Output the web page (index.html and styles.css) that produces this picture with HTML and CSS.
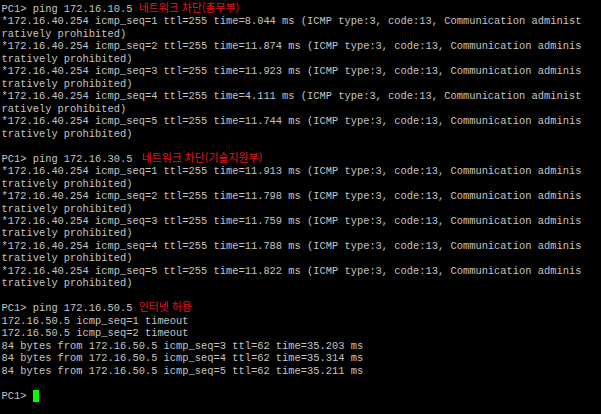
FILE: index.html
```html
<!DOCTYPE html>
<html lang="ko">
<head>
<meta charset="utf-8">
<title>PC1 terminal</title>
<link rel="stylesheet" href="styles.css">
</head>
<body>
<pre class="term">PC1&gt; ping 172.16.10.5 <span class="note">네트워크 차단(총무부)</span>
*172.16.40.254 icmp_seq=1 ttl=255 time=8.044 ms (ICMP type:3, code:13, Communication administ
ratively prohibited)
*172.16.40.254 icmp_seq=2 ttl=255 time=11.874 ms (ICMP type:3, code:13, Communication adminis
tratively prohibited)
*172.16.40.254 icmp_seq=3 ttl=255 time=11.923 ms (ICMP type:3, code:13, Communication adminis
tratively prohibited)
*172.16.40.254 icmp_seq=4 ttl=255 time=4.111 ms (ICMP type:3, code:13, Communication administ
ratively prohibited)
*172.16.40.254 icmp_seq=5 ttl=255 time=11.744 ms (ICMP type:3, code:13, Communication adminis
tratively prohibited)

PC1&gt; ping 172.16.30.5 <span class="note note-wide">네트워크 차단(기술지원부)</span>
*172.16.40.254 icmp_seq=1 ttl=255 time=11.913 ms (ICMP type:3, code:13, Communication adminis
tratively prohibited)
*172.16.40.254 icmp_seq=2 ttl=255 time=11.798 ms (ICMP type:3, code:13, Communication adminis
tratively prohibited)
*172.16.40.254 icmp_seq=3 ttl=255 time=11.759 ms (ICMP type:3, code:13, Communication adminis
tratively prohibited)
*172.16.40.254 icmp_seq=4 ttl=255 time=11.788 ms (ICMP type:3, code:13, Communication adminis
tratively prohibited)
*172.16.40.254 icmp_seq=5 ttl=255 time=11.822 ms (ICMP type:3, code:13, Communication adminis
tratively prohibited)

PC1&gt; ping 172.16.50.5 <span class="note">인터넷 허용</span>
172.16.50.5 icmp_seq=1 timeout
172.16.50.5 icmp_seq=2 timeout
84 bytes from 172.16.50.5 icmp_seq=3 ttl=62 time=35.203 ms
84 bytes from 172.16.50.5 icmp_seq=4 ttl=62 time=35.314 ms
84 bytes from 172.16.50.5 icmp_seq=5 ttl=62 time=35.211 ms

PC1&gt; <span class="cursor"></span></pre>
</body>
</html>
```

FILE: styles.css
```css
html, body {
  margin: 0;
  padding: 0;
  background: #000;
  height: 100%;
  overflow: hidden;
}

.term {
  margin: 0;
  padding: 3px 0 0 1.5px;
  font-family: "Liberation Mono", "Courier New", monospace;
  font-size: 10.4px;
  line-height: 12.47px;
  color: #c4c4c4;
  white-space: pre;
}

.note {
  font-family: "Noto Sans CJK KR", "Noto Sans", sans-serif;
  font-size: 10.9px;
  line-height: 0;
  color: #e3151a;
}

.note-wide {
  margin-left: 3px;
}

.cursor {
  display: inline-block;
  width: 6.2px;
  height: 12px;
  background: #00ff00;
  vertical-align: top;
}
```
